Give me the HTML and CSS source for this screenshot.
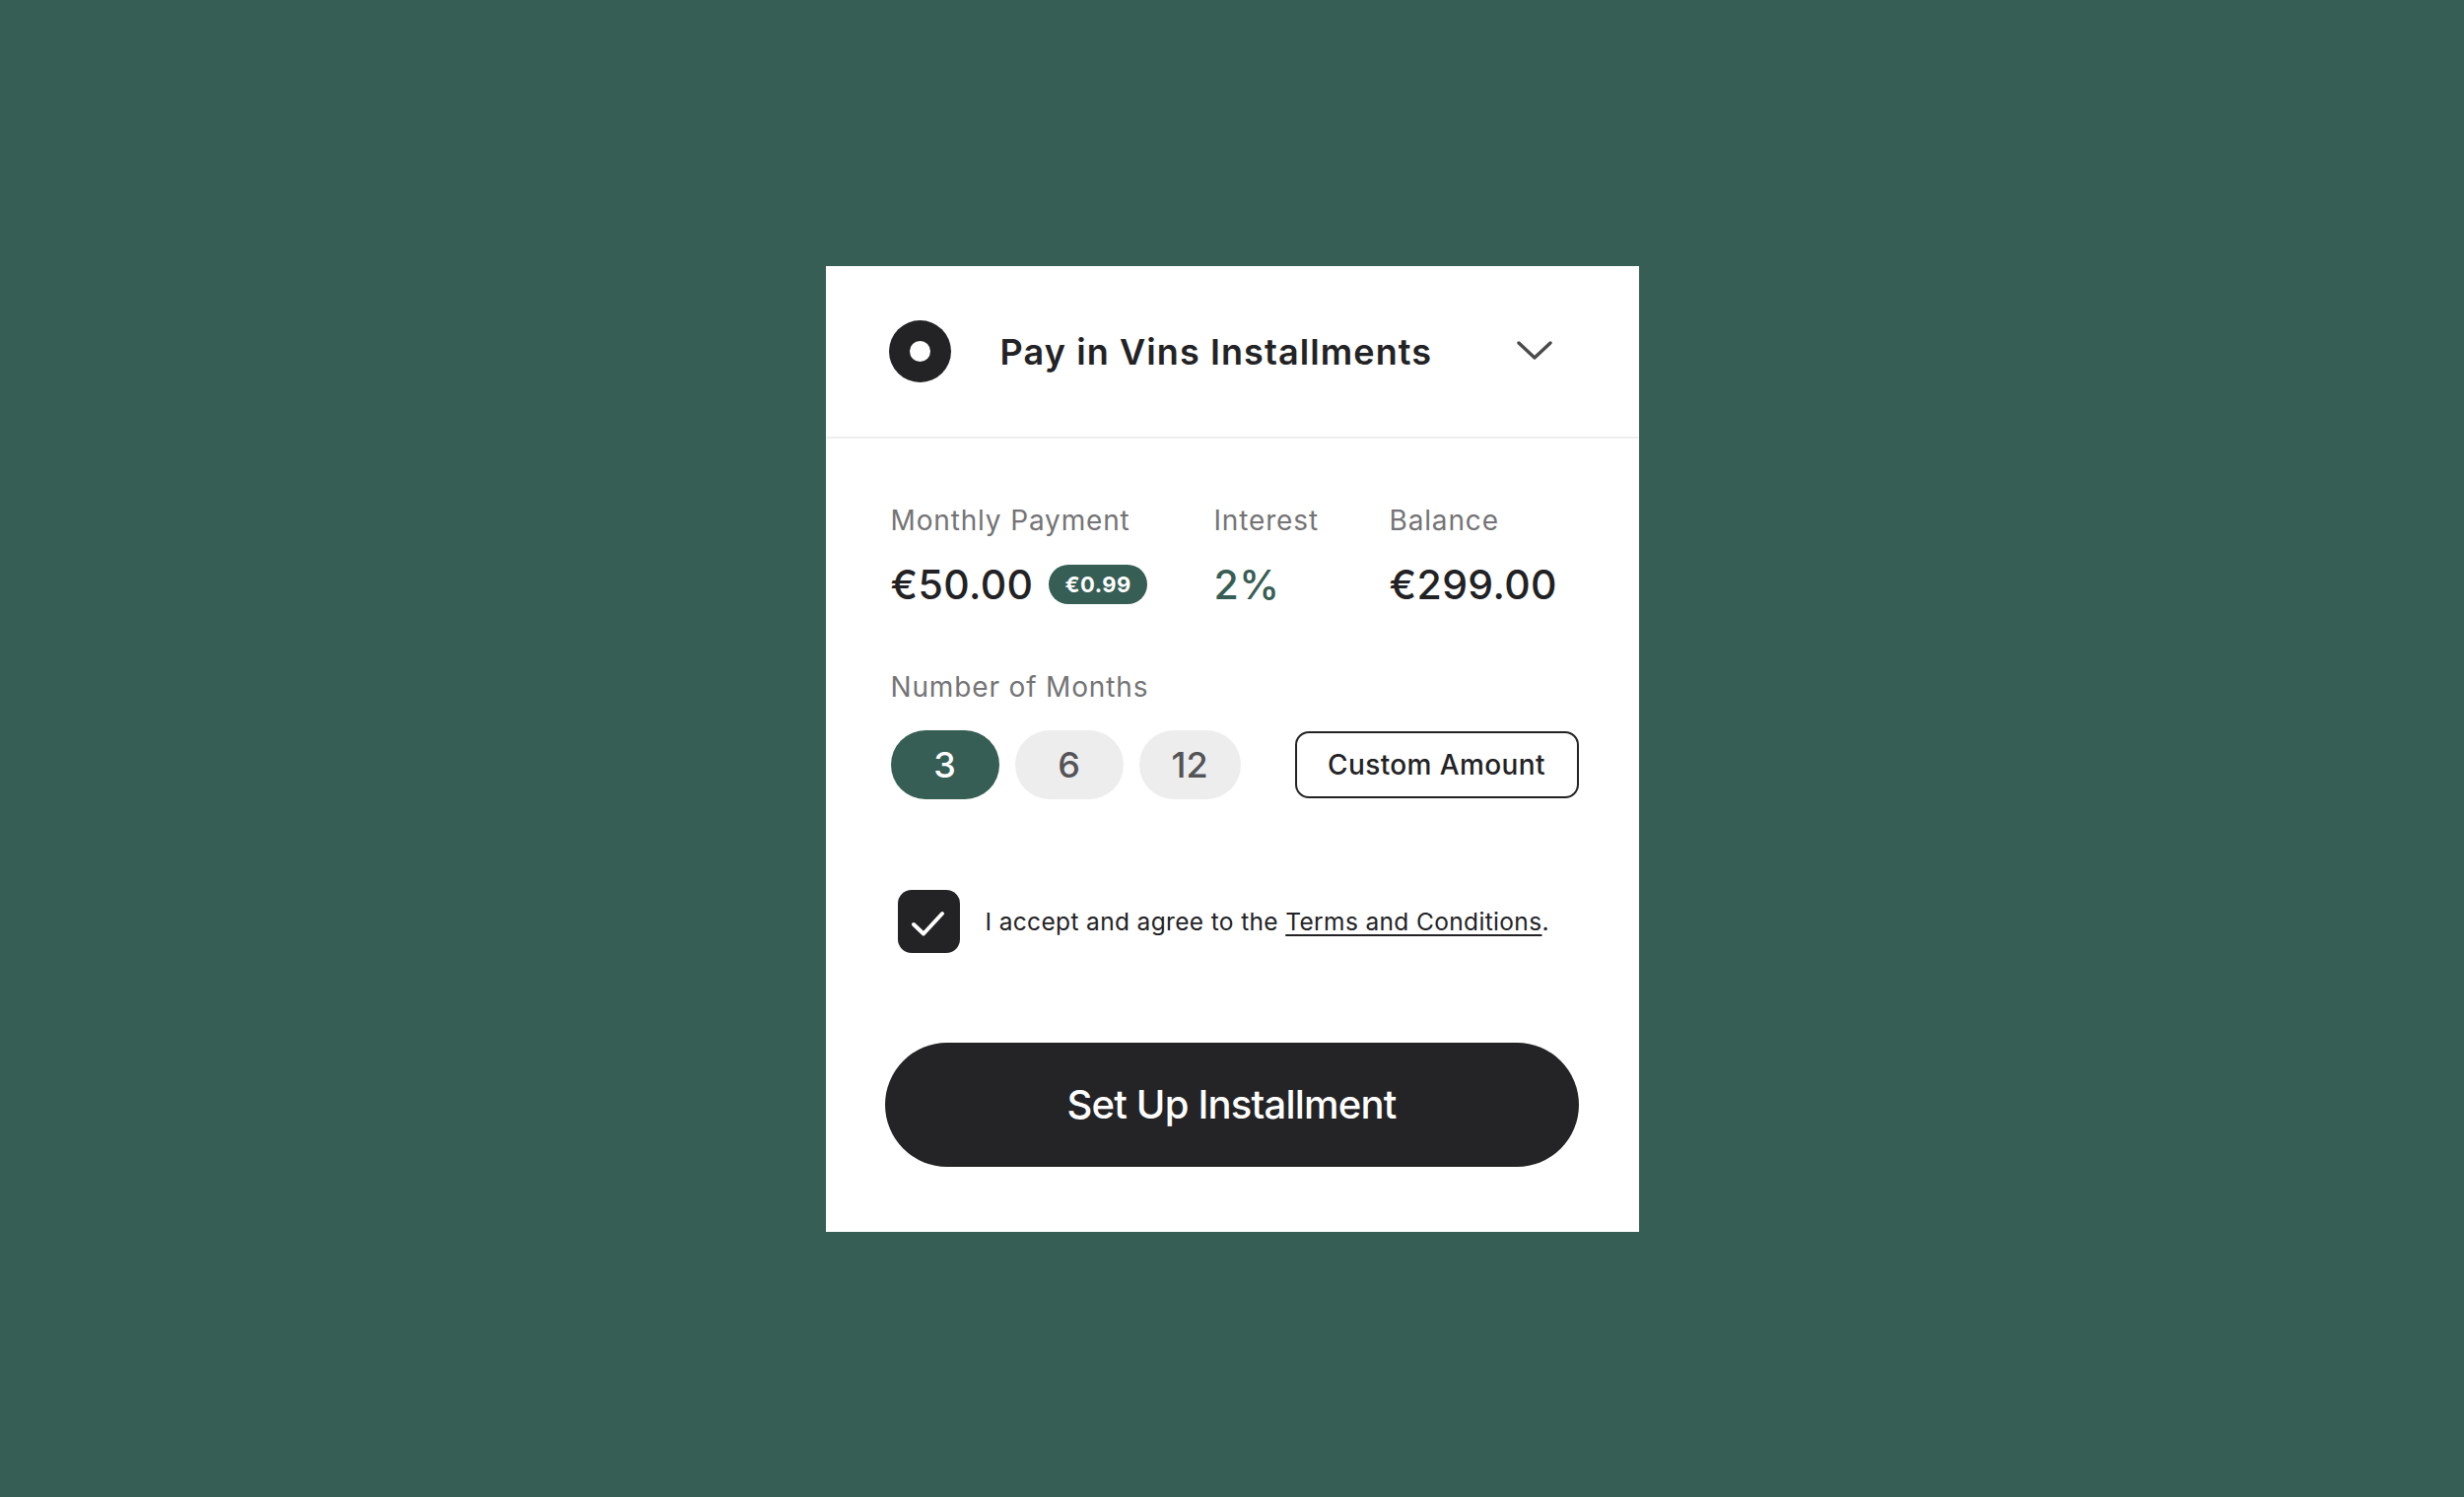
FILE: index.html
```html
<!DOCTYPE html>
<html lang="en">
<head>
<meta charset="utf-8">
<title>Pay in Vins Installments</title>
<link rel="stylesheet" href="styles.css">
</head>
<body>
<main class="stage">
  <section class="card">
    <header class="card-header">
      <span class="radio"><span class="radio-dot"></span></span>
      <h1 class="title">Pay in Vins Installments</h1>
      <svg class="chevron" width="36" height="20" viewBox="0 0 36 20" aria-hidden="true">
        <path d="M2 2 L18 17 L34 2" fill="none" stroke="#4a4a4a" stroke-width="3.4" stroke-linecap="round" stroke-linejoin="round"/>
      </svg>
    </header>
    <div class="card-body">
      <div class="stats">
        <div class="stat">
          <div class="stat-label">Monthly Payment</div>
          <div class="stat-value-row">
            <span class="stat-value">€50.00</span>
            <span class="badge">€0.99</span>
          </div>
        </div>
        <div class="stat">
          <div class="stat-label">Interest</div>
          <div class="stat-value-row"><span class="stat-value green">2%</span></div>
        </div>
        <div class="stat">
          <div class="stat-label">Balance</div>
          <div class="stat-value-row"><span class="stat-value">€299.00</span></div>
        </div>
      </div>

      <div class="months">
        <div class="stat-label">Number of Months</div>
        <div class="months-row">
          <button class="pill active">3</button>
          <button class="pill">6</button>
          <button class="pill narrow">12</button>
          <button class="custom">Custom Amount</button>
        </div>
      </div>

      <label class="agree">
        <span class="checkbox">
          <svg width="63" height="64" viewBox="0 0 63 64" aria-hidden="true">
            <path d="M16 35 L26 44.5 L45 24" fill="none" stroke="#ffffff" stroke-width="4" stroke-linecap="round" stroke-linejoin="round"/>
          </svg>
        </span>
        <span class="agree-text">I accept and agree to the <a class="link" href="#">Terms and Conditions</a>.</span>
      </label>

      <button class="submit">Set Up Installment</button>
    </div>
  </section>
</main>
</body>
</html>
```

FILE: styles.css
```css
* { box-sizing: border-box; }

html, body {
  margin: 0;
  padding: 0;
  height: 100%;
}

body {
  background: #375e55;
  font-family: Inter, "Noto Sans", "Liberation Sans", sans-serif;
  color: #222224;
}

.stage {
  height: 100%;
  display: flex;
  align-items: center;
  justify-content: center;
}

.card {
  width: 825px;
  height: 980px;
  background: #ffffff;
  display: flex;
  flex-direction: column;
}

.card-header {
  height: 175px;
  border-bottom: 2px solid #eeeeee;
  display: flex;
  align-items: center;
  padding: 0 0 0 64px;
}

.radio {
  width: 63px;
  height: 63px;
  border-radius: 50%;
  background: #232325;
  display: flex;
  align-items: center;
  justify-content: center;
  flex: none;
}

.radio-dot {
  width: 21px;
  height: 21px;
  border-radius: 50%;
  background: #ffffff;
}

.title {
  margin: 2px 0 0 50px;
  font-size: 36px;
  font-weight: 600;
  letter-spacing: 1.1px;
  color: #232325;
  line-height: 1;
}

.chevron {
  margin-left: auto;
  margin-right: 88px;
  flex: none;
}

.card-body {
  padding: 66px 61px 66px 60px;
  display: flex;
  flex-direction: column;
}

.stats {
  display: grid;
  grid-template-columns: 328px 178px auto;
  padding-left: 6px;
}

.stat-label {
  font-size: 28px;
  line-height: 34px;
  color: #747476;
  letter-spacing: 0.85px;
}

.stat-value-row {
  margin-top: 23px;
  height: 50px;
  display: flex;
  align-items: center;
  gap: 16px;
}

.stat-value {
  font-size: 41px;
  line-height: 50px;
  font-weight: 500;
  letter-spacing: 0.4px;
  color: #222224;
}

.stat-value.green {
  color: #365e54;
}

.badge {
  height: 40px;
  padding: 0 16px;
  border-radius: 20px;
  background: #365e54;
  color: #ffffff;
  font-size: 22px;
  font-weight: 700;
  letter-spacing: 0.5px;
  display: inline-flex;
  align-items: center;
}

.months {
  margin-top: 62px;
  padding-left: 6px;
}

.months-row {
  margin-top: 27px;
  display: flex;
  align-items: center;
  gap: 16px;
}

.pill {
  height: 70px;
  min-width: 110px;
  padding: 0 28px;
  border: none;
  border-radius: 35px;
  background: #ededee;
  color: #545456;
  font-family: inherit;
  font-size: 36px;
  font-weight: 500;
  display: inline-flex;
  align-items: center;
  justify-content: center;
}

.pill.narrow {
  min-width: 0;
  padding: 0 33px;
}

.pill.active {
  background: #365e54;
  color: #ffffff;
}

.custom {
  margin-left: auto;
  height: 68px;
  width: 288px;
  border: 2px solid #232325;
  border-radius: 14px;
  background: #ffffff;
  color: #232325;
  font-family: inherit;
  font-size: 28px;
  font-weight: 500;
  letter-spacing: 0.4px;
}

.agree {
  margin-top: 92px;
  padding-left: 13px;
  display: flex;
  align-items: center;
  gap: 26px;
}

.checkbox {
  width: 63px;
  height: 64px;
  border-radius: 14px;
  background: #232325;
  display: block;
  flex: none;
}

.checkbox svg {
  display: block;
}

.agree-text {
  font-size: 24.5px;
  color: #232325;
  letter-spacing: 0.35px;
}

.link {
  color: inherit;
  text-decoration: underline;
  text-decoration-thickness: 1.5px;
  text-underline-offset: 4px;
}

.submit {
  margin-top: 91px;
  height: 126px;
  width: 704px;
  border: none;
  border-radius: 63px;
  background: #242426;
  color: #ffffff;
  font-family: inherit;
  font-size: 40px;
  font-weight: 500;
  letter-spacing: -0.8px;
}
```
